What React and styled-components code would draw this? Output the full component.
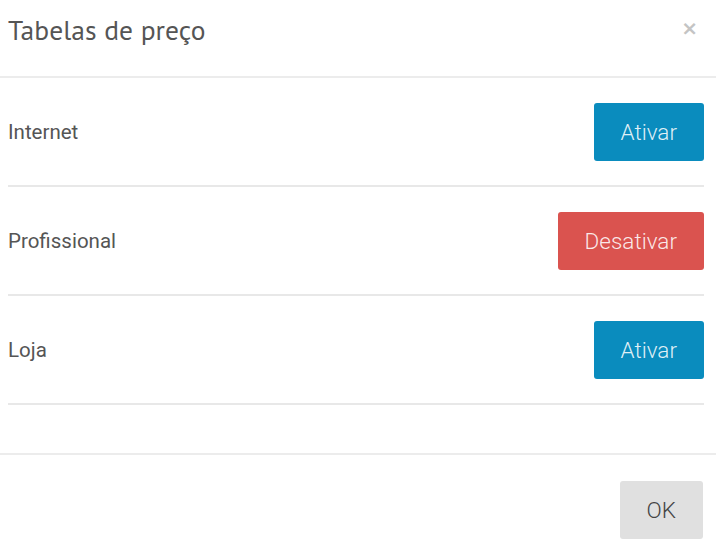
import React from "react";
import styled, { createGlobalStyle } from "styled-components";

const Global = createGlobalStyle`
  html, body { margin: 0; padding: 0; background: #fff; }
  body { font-family: Roboto, "Noto Sans", sans-serif; }
  * { box-sizing: border-box; }
`;

const Modal = styled.div`
  width: 716px;
  height: 553px;
  display: flex;
  flex-direction: column;
  background: #fff;
  overflow: hidden;
`;

const Header = styled.div`
  height: 78px;
  display: flex;
  align-items: center;
  justify-content: space-between;
  padding: 0 18px 16px 8px;
  border-bottom: 2px solid #ececec;
`;

const Title = styled.h2`
  margin: 0;
  font-family: "Liberation Sans Narrow", "PT Sans", "Open Sans", sans-serif;
  font-weight: 400;
  font-size: 27.5px;
  color: #555;
  letter-spacing: 0.1px;
`;

const Close = styled.button`
  border: 0;
  background: none;
  padding: 0;
  margin-top: -4px;
  font-family: "DejaVu Sans", sans-serif;
  font-size: 20px;
  font-weight: 700;
  line-height: 1;
  color: #c4c4c4;
  cursor: pointer;
`;

const Body = styled.div`
  display: flex;
  flex-direction: column;
  padding: 0 12px 48px 8px;
  border-bottom: 2px solid #ececec;
`;

const Row = styled.div`
  display: flex;
  align-items: center;
  justify-content: space-between;
  padding: 25px 0 24px;
  border-bottom: 2px solid #e8e8e8;
`;

const Label = styled.span`
  font-size: 20.5px;
  color: #555;
`;

const Button = styled.button`
  height: 58px;
  padding: 0 27px;
  border: 0;
  border-radius: 3px;
  font-family: Roboto, sans-serif;
  font-weight: 300;
  font-size: 22.5px;
  cursor: pointer;
  background: ${(p) => (p.$variant === "danger" ? "#da534f" : p.$variant === "primary" ? "#0a8cbe" : "#e0e0e0")};
  color: ${(p) => (p.$variant === "default" ? "#444" : "rgba(255,255,255,0.88)")};
`;

const Footer = styled.div`
  display: flex;
  justify-content: flex-end;
  padding: 26px 13px 0 8px;
`;

const rows = [
  { name: "Internet", active: false },
  { name: "Profissional", active: true },
  { name: "Loja", active: false },
];

export default function App() {
  return (
    <>
      <Global />
      <Modal>
        <Header>
          <Title>Tabelas de preço</Title>
          <Close aria-label="Fechar">×</Close>
        </Header>
        <Body>
          {rows.map((r) => (
            <Row key={r.name}>
              <Label>{r.name}</Label>
              <Button $variant={r.active ? "danger" : "primary"}>
                {r.active ? "Desativar" : "Ativar"}
              </Button>
            </Row>
          ))}
        </Body>
        <Footer>
          <Button $variant="default">OK</Button>
        </Footer>
      </Modal>
    </>
  );
}
